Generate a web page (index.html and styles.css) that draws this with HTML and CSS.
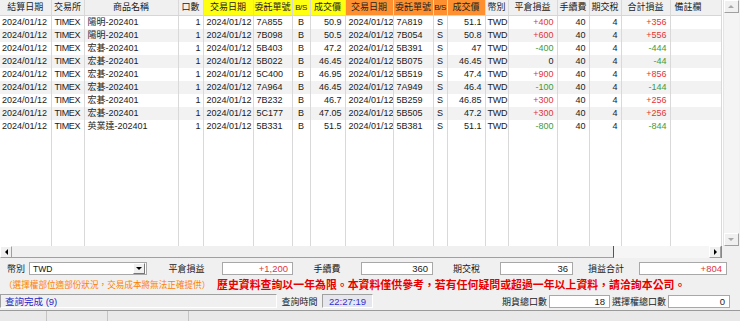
FILE: index.html
```html
<!DOCTYPE html>
<html>
<head>
<meta charset="utf-8">
<link rel="stylesheet" href="styles.css">
</head>
<body>
<div class="win">
  <div class="gridarea">
    <div class="gridbody">
      <table class="grid">
        <colgroup>
          <col style="width:51px"><col style="width:33px"><col style="width:94px"><col style="width:25px">
          <col style="width:50px"><col style="width:39px"><col style="width:18px"><col style="width:35px">
          <col style="width:48px"><col style="width:40px"><col style="width:14px"><col style="width:38px">
          <col style="width:23px"><col style="width:49px"><col style="width:32px"><col style="width:32px">
          <col style="width:49px"><col style="width:51px">
        </colgroup>
        <thead>
          <tr>
            <th>結算日期</th><th>交易所</th><th>商品名稱</th><th>口數</th>
            <th class="hy">交易日期</th><th class="hy">委託單號</th><th class="hy bs">B/S</th><th class="hy">成交價</th>
            <th class="ho">交易日期</th><th class="ho">委託單號</th><th class="ho bs">B/S</th><th class="ho">成交價</th>
            <th>幣別</th><th>平倉損益</th><th>手續費</th><th>期交稅</th><th>合計損益</th><th class="al">備註欄</th>
          </tr>
        </thead>
        <tbody>
          <tr><td>2024/01/12</td><td class="ex">TIMEX</td><td class="nm">陽明-202401</td><td class="r q">1</td><td class="nm">2024/01/12</td><td class="nm">7A855</td><td class="c">B</td><td class="r">50.9</td><td class="nm">2024/01/12</td><td class="nm">7A819</td><td class="c">S</td><td class="r">51.1</td><td class="cur">TWD</td><td class="r up">+400</td><td class="r">40</td><td class="r">4</td><td class="r up">+356</td><td></td></tr>
          <tr class="alt"><td>2024/01/12</td><td class="ex">TIMEX</td><td class="nm">陽明-202401</td><td class="r q">1</td><td class="nm">2024/01/12</td><td class="nm">7B098</td><td class="c">B</td><td class="r">50.5</td><td class="nm">2024/01/12</td><td class="nm">7B054</td><td class="c">S</td><td class="r">50.8</td><td class="cur">TWD</td><td class="r up">+600</td><td class="r">40</td><td class="r">4</td><td class="r up">+556</td><td></td></tr>
          <tr><td>2024/01/12</td><td class="ex">TIMEX</td><td class="nm">宏碁-202401</td><td class="r q">1</td><td class="nm">2024/01/12</td><td class="nm">5B403</td><td class="c">B</td><td class="r">47.2</td><td class="nm">2024/01/12</td><td class="nm">5B391</td><td class="c">S</td><td class="r">47</td><td class="cur">TWD</td><td class="r dn">-400</td><td class="r">40</td><td class="r">4</td><td class="r dn">-444</td><td></td></tr>
          <tr class="alt"><td>2024/01/12</td><td class="ex">TIMEX</td><td class="nm">宏碁-202401</td><td class="r q">1</td><td class="nm">2024/01/12</td><td class="nm">5B022</td><td class="c">B</td><td class="r">46.45</td><td class="nm">2024/01/12</td><td class="nm">5B075</td><td class="c">S</td><td class="r">46.45</td><td class="cur">TWD</td><td class="r">0</td><td class="r">40</td><td class="r">4</td><td class="r dn">-44</td><td></td></tr>
          <tr><td>2024/01/12</td><td class="ex">TIMEX</td><td class="nm">宏碁-202401</td><td class="r q">1</td><td class="nm">2024/01/12</td><td class="nm">5C400</td><td class="c">B</td><td class="r">46.95</td><td class="nm">2024/01/12</td><td class="nm">5B519</td><td class="c">S</td><td class="r">47.4</td><td class="cur">TWD</td><td class="r up">+900</td><td class="r">40</td><td class="r">4</td><td class="r up">+856</td><td></td></tr>
          <tr class="alt"><td>2024/01/12</td><td class="ex">TIMEX</td><td class="nm">宏碁-202401</td><td class="r q">1</td><td class="nm">2024/01/12</td><td class="nm">7A964</td><td class="c">B</td><td class="r">46.45</td><td class="nm">2024/01/12</td><td class="nm">7A949</td><td class="c">S</td><td class="r">46.4</td><td class="cur">TWD</td><td class="r dn">-100</td><td class="r">40</td><td class="r">4</td><td class="r dn">-144</td><td></td></tr>
          <tr><td>2024/01/12</td><td class="ex">TIMEX</td><td class="nm">宏碁-202401</td><td class="r q">1</td><td class="nm">2024/01/12</td><td class="nm">7B232</td><td class="c">B</td><td class="r">46.7</td><td class="nm">2024/01/12</td><td class="nm">5B259</td><td class="c">S</td><td class="r">46.85</td><td class="cur">TWD</td><td class="r up">+300</td><td class="r">40</td><td class="r">4</td><td class="r up">+256</td><td></td></tr>
          <tr class="alt"><td>2024/01/12</td><td class="ex">TIMEX</td><td class="nm">宏碁-202401</td><td class="r q">1</td><td class="nm">2024/01/12</td><td class="nm">5C177</td><td class="c">B</td><td class="r">47.05</td><td class="nm">2024/01/12</td><td class="nm">5B505</td><td class="c">S</td><td class="r">47.2</td><td class="cur">TWD</td><td class="r up">+300</td><td class="r">40</td><td class="r">4</td><td class="r up">+256</td><td></td></tr>
          <tr><td>2024/01/12</td><td class="ex">TIMEX</td><td class="nm">英業達-202401</td><td class="r q">1</td><td class="nm">2024/01/12</td><td class="nm">5B331</td><td class="c">B</td><td class="r">51.5</td><td class="nm">2024/01/12</td><td class="nm">5B381</td><td class="c">S</td><td class="r">51.1</td><td class="cur">TWD</td><td class="r dn">-800</td><td class="r">40</td><td class="r">4</td><td class="r dn">-844</td><td></td></tr>
          <tr class="filler"><td></td><td></td><td></td><td></td><td></td><td></td><td></td><td></td><td></td><td></td><td></td><td></td><td></td><td></td><td></td><td></td><td></td><td></td></tr>
        </tbody>
      </table>
      <div class="vscroll">
        <div class="sbtn"><span class="tri tri-up"></span></div>
        <div class="vtrack"></div>
        <div class="sbtn"><span class="tri tri-down"></span></div>
      </div>
    </div>
    <div class="hrow">
      <div class="hscroll">
        <div class="sbtn hb"><span class="tri tri-left"></span></div>
        <div class="hthumb"></div>
        <div class="htrack"></div>
        <div class="sbtn hb"><span class="tri tri-right"></span></div>
      </div>
      <div class="corner"></div>
    </div>
  </div>

  <div class="panel">
    <div class="prow1">
      <span class="lbl l-cur">幣別</span>
      <div class="select"><span class="sel-text">TWD</span><span class="sel-btn"><span class="tri tri-down dark"></span></span></div>
      <span class="lbl l1">平倉損益</span>
      <div class="box b1 up">+1,200</div>
      <span class="lbl l2">手續費</span>
      <div class="box b2">360</div>
      <span class="lbl l3">期交稅</span>
      <div class="box b3">36</div>
      <span class="lbl l4">損益合計</span>
      <div class="box b4 up">+804</div>
    </div>
    <div class="prow2">
      <span class="warn">（選擇權部位適部份狀況，交易成本將無法正確提供）</span>
      <span class="notice">歷史資料查詢以一年為限。本資料僅供參考，若有任何疑問或超過一年以上資料，請洽詢本公司。</span>
    </div>
    <div class="prow3">
      <div class="status">查詢完成 (9)</div>
      <span class="lbl l5">查詢時間</span>
      <div class="timebox">22:27:19</div>
      <span class="lbl l6">期貨總口數</span>
      <div class="box b5">18</div>
      <span class="lbl l7">選擇權總口數</span>
      <div class="box b6">0</div>
    </div>
    <div class="prow4">
      <div class="seg s1"></div>
      <div class="seg s2"></div>
      <div class="seg s3"></div>
    </div>
  </div>
</div>
</body>
</html>
```

FILE: styles.css
```css
html, body {
  margin: 0;
  padding: 0;
  width: 740px;
  height: 321px;
  overflow: hidden;
  background: #f0f0f0;
  font-family: "Liberation Sans", "Noto Sans CJK TC", sans-serif;
  font-size: 9.5px;
  color: #111;
}

.win {
  width: 740px;
  height: 321px;
  display: flex;
  flex-direction: column;
}

.gridarea {
  width: 739px;
  height: 258px;
  background: #fff;
  display: flex;
  flex-direction: column;
}

.gridbody {
  display: flex;
  height: 246px;
}

.grid {
  width: 721px;
  table-layout: fixed;
  border-collapse: collapse;
  background: #fff;
  margin-right: 1px;
}

.grid th,
.grid td {
  white-space: nowrap;
  overflow: hidden;
  border-right: 1px solid #d9d9d9;
}

.grid th {
  height: 15px;
  line-height: 15px;
  font-weight: normal;
  font-size: 9px;
  background: #f0f0f0;
  text-align: center;
  padding: 0;
  border-bottom: 1px solid #d6d6d6;
  color: #222;
}

.grid th.hy { background: #ffff10; }
.grid th.ho { background: #ff9030; }
.grid th.bs { font-size: 8px; letter-spacing: -0.4px; }
.grid th.al { text-align: left; padding-left: 4px; }

.grid td {
  height: 13px;
  line-height: 13px;
  font-size: 9px;
  padding: 0 3px 0 2px;
  color: #1a1a1a;
}

.grid tr.alt td { background: #f2f2f2; }

.grid td.nm { padding-left: 3px; }
.grid td.ex { padding-left: 3px; letter-spacing: -0.4px; }
.grid td.cur { padding-left: 2px; letter-spacing: -0.3px; }
.grid td.r { text-align: right; }
.grid td.q { padding-right: 2px; }
.grid td.c { text-align: center; padding: 0; }
.grid .up { color: #e43535; }
.grid .dn { color: #3f9b3a; }

.grid tr.filler td {
  height: 112px;
  background: #fff;
}

.vscroll {
  width: 16px;
  height: 246px;
  background: #f0f0f0;
  display: flex;
  flex-direction: column;
  border-left: 1px solid #e4e4e4;
}

.vtrack { flex: 1; background: #f4f4f4; }

.sbtn {
  width: 14px;
  height: 12px;
  background: #f0f0f0;
  border: 1px solid #fff;
  border-right-color: #a0a0a0;
  border-bottom-color: #a0a0a0;
  display: flex;
  align-items: center;
  justify-content: center;
  box-sizing: border-box;
}

.vscroll .sbtn { width: 15px; height: 13px; }

.tri {
  width: 0;
  height: 0;
  border-style: solid;
  display: block;
}

.tri-up {
  border-width: 0 3px 3px 3px;
  border-color: transparent transparent #a8a8a8 transparent;
}

.tri-down {
  border-width: 3px 3px 0 3px;
  border-color: #a8a8a8 transparent transparent transparent;
}

.tri-down.dark { border-top-color: #000; }

.tri-left {
  border-width: 3px 3px 3px 0;
  border-color: transparent #000 transparent transparent;
}

.tri-right {
  border-width: 3px 0 3px 3px;
  border-color: transparent transparent transparent #000;
}

.hrow {
  display: flex;
  height: 12px;
  background: #f0f0f0;
}

.hscroll {
  display: flex;
  width: 721px;
  height: 12px;
  background: #f4f4f4;
}

.hb { width: 12px; height: 12px; }

.hthumb {
  width: 602px;
  height: 12px;
  box-sizing: border-box;
  background: #f0f0f0;
  border-right: 1px solid #555;
  border-bottom: 1px solid #a0a0a0;
}

.htrack { flex: 1; background: #f6f6f6; }

.corner {
  flex: 1;
  background: #f0f0f0;
  border-left: 1px solid #888;
}

.panel {
  display: flex;
  flex-direction: column;
  background: #f0f0f0;
  font-size: 9px;
}

.prow1 {
  height: 21px;
  display: flex;
  align-items: center;
  padding-left: 7px;
}

.lbl {
  display: block;
  text-align: center;
  color: #1a1a1a;
  white-space: nowrap;
}

.l-cur { width: 22px; text-align: left; }
.l1 { width: 75px; padding-left: 4px; box-sizing: border-box; }
.l2 { width: 68px; }
.l3 { width: 67px; }
.l4 { width: 66px; }

.select {
  width: 118px;
  height: 13px;
  box-sizing: border-box;
  background: #fff;
  border: 1px solid #a8a8a8;
  display: flex;
  align-items: center;
  justify-content: space-between;
}

.sel-text { padding-left: 3px; font-size: 8.5px; }

.sel-btn {
  width: 10px;
  height: 9px;
  margin-right: 1px;
  background: #f0f0f0;
  border: 1px solid #fff;
  border-right-color: #777;
  border-bottom-color: #777;
  display: flex;
  align-items: center;
  justify-content: center;
}

.box {
  height: 13px;
  line-height: 11px;
  box-sizing: border-box;
  background: #fff;
  border: 1px solid #a8a8a8;
  text-align: right;
  padding-right: 4px;
  font-size: 9.5px;
  color: #1a1a1a;
}

.box.up { color: #e43535; }
.b1 { width: 71px; }
.b2 { width: 72px; }
.b3 { width: 73px; }
.b4 { width: 88px; }

.prow2 {
  height: 13px;
  line-height: 13px;
  display: flex;
  align-items: center;
  white-space: nowrap;
}

.warn {
  color: #ff8000;
  font-size: 8.6px;
  padding-left: 4px;
  width: 213px;
  flex: none;
  overflow: hidden;
}

.notice {
  color: #e80000;
  font-weight: bold;
  font-size: 10.9px;
}

.prow3 {
  height: 18px;
  display: flex;
  align-items: center;
}

.status {
  width: 277px;
  height: 14px;
  line-height: 13px;
  box-sizing: border-box;
  border: 1px solid #fff;
  border-top-color: #a0a0a0;
  border-left-color: #a0a0a0;
  color: #2525c8;
  padding-left: 4px;
  font-size: 9.5px;
}

.l5 { width: 45px; }

.timebox {
  width: 51px;
  height: 14px;
  line-height: 13px;
  box-sizing: border-box;
  background: #e6e6ee;
  border: 1px solid #fff;
  border-top-color: #a0a0a0;
  border-left-color: #a0a0a0;
  color: #3030d0;
  text-align: center;
  font-size: 9.5px;
}

.l6 { width: 176px; text-align: right; padding-right: 2px; box-sizing: border-box; }
.b5 { width: 61px; }
.l7 { width: 58px; }
.b6 { width: 62px; }

.prow4 {
  height: 11px;
  display: flex;
  border-top: 1px solid #9a9a9a;
  background: #e9e9e9;
  box-sizing: border-box;
}

.seg { height: 100%; border-right: 1px solid #c4c4c4; }
.s1 { width: 46px; }
.s2 { width: 60px; }
.s3 { width: 80px; }
```
